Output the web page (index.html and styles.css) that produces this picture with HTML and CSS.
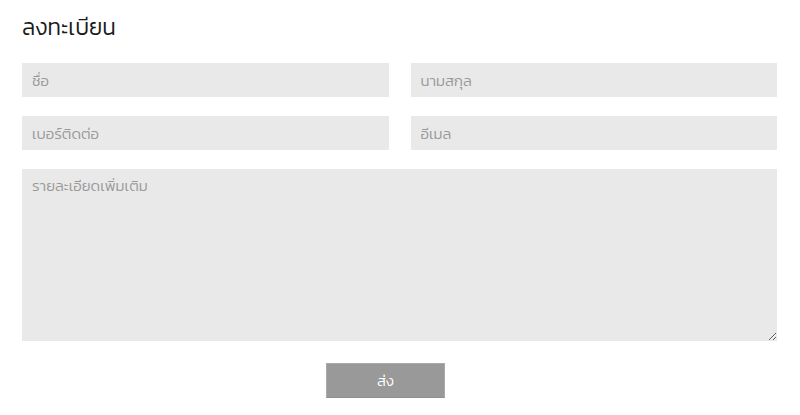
FILE: index.html
```html
<!DOCTYPE html>
<html lang="th">
<head>
  <meta charset="UTF-8">
  <meta name="viewport" content="width=device-width, initial-scale=1.0">
  <title>ลงทะเบียน</title>
  <link rel="stylesheet" href="styles.css">
</head>
<body>

  <section class="register">
    <h1>ลงทะเบียน</h1>
    <form class="form">
      <div class="row">
        <input type="text" placeholder="ชื่อ">
        <input type="text" placeholder="นามสกุล">
      </div>
      <div class="row">
        <input type="text" placeholder="เบอร์ติดต่อ">
        <input type="email" placeholder="อีเมล">
      </div>
      <textarea placeholder="รายละเอียดเพิ่มเติม"></textarea>
      <div class="actions">
        <button type="button">ส่ง</button>
      </div>
    </form>
  </section>

</body>
</html>
```

FILE: styles.css
```css
body {
  font-family: 'Kanit', 'Noto Sans Thai', sans-serif;
  font-weight: 300;
  background-color: #fff;
  margin: 0;
  padding: 0;
}

.register {
  padding: 12px 23px 0 22px;
}

h1 {
  font-size: 22.5px;
  font-weight: 300;
  color: #1a1a1a;
  margin: 0 0 21px 0;
  line-height: 30px;
}

.form {
  display: flex;
  flex-direction: column;
  gap: 19px;
}

.row {
  display: flex;
  gap: 22px;
}

input,
textarea {
  font-family: inherit;
  font-weight: 300;
  font-size: 15px;
  color: #333;
  background-color: #e9e9e9;
  border: none;
  outline: none;
  box-sizing: border-box;
  padding: 0 10px;
}

input {
  flex: 1;
  height: 34px;
}

textarea {
  height: 172px;
  padding-top: 5px;
}

input::placeholder,
textarea::placeholder {
  color: #999;
}

.actions {
  padding-left: 304px;
  margin-top: 3px;
}

button {
  width: 119px;
  height: 35px;
  font-family: inherit;
  font-weight: 300;
  font-size: 15px;
  color: #fff;
  background-color: #999;
  border: 1px solid #aaa;
  border-bottom-color: #8f8f8f;
}
```
